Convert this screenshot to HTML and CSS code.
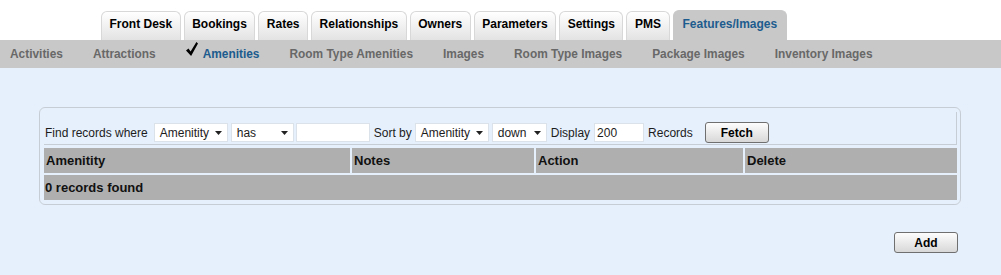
FILE: index.html
```html
<!DOCTYPE html>
<html lang="en">
<head>
    <meta charset="UTF-8">
    <meta name="viewport" content="width=device-width, initial-scale=1.0">
    <title>Amenities</title>
    <link rel="stylesheet" href="styles.css">
</head>
<body>
    <div class="tabs">
        <a class="tab">Front Desk</a>
        <a class="tab">Bookings</a>
        <a class="tab">Rates</a>
        <a class="tab">Relationships</a>
        <a class="tab">Owners</a>
        <a class="tab">Parameters</a>
        <a class="tab">Settings</a>
        <a class="tab">PMS</a>
        <a class="tab active">Features/Images</a>
    </div>

    <div class="subnav">
        <a>Activities</a>
        <a>Attractions</a>
        <a class="current"><svg class="check" width="12" height="14" viewBox="0 0 12 14"><path d="M0 8.4 L2.5 6.5 L4.6 9.5 L10.4 0 L12 1.4 L5.1 14 Z" fill="#000"/></svg>Amenities</a>
        <a>Room Type Amenities</a>
        <a>Images</a>
        <a>Room Type Images</a>
        <a>Package Images</a>
        <a>Inventory Images</a>
    </div>

    <div class="content">
        <div class="panel">
            <div class="filter">
                <span>Find records where</span>
                <span class="select field-where">Amenitity <svg width="7" height="4" viewBox="0 0 7 4"><polygon points="0,0 7,0 3.5,4" fill="#222"/></svg></span>
                <span class="select op">has <svg width="7" height="4" viewBox="0 0 7 4"><polygon points="0,0 7,0 3.5,4" fill="#222"/></svg></span>
                <input class="text search" type="text">
                <span class="gap">Sort by</span>
                <span class="select field-sort">Amenitity <svg width="7" height="4" viewBox="0 0 7 4"><polygon points="0,0 7,0 3.5,4" fill="#222"/></svg></span>
                <span class="select dir">down <svg width="7" height="4" viewBox="0 0 7 4"><polygon points="0,0 7,0 3.5,4" fill="#222"/></svg></span>
                <span class="gap">Display</span>
                <input class="text count" type="text" value="200">
                <span class="gap">Records</span>
                <button class="btn fetch">Fetch</button>
            </div>

            <div class="grid head">
                <div>Amenitity</div>
                <div>Notes</div>
                <div>Action</div>
                <div>Delete</div>
            </div>
            <div class="empty">0 records found</div>
        </div>

        <div class="actions">
            <button class="btn">Add</button>
        </div>
    </div>
</body>
</html>
```

FILE: styles.css
```css
body {
    margin: 0;
    font-family: "Liberation Sans", Arial, sans-serif;
    background-color: #e6f0fc;
    color: #1c1c1c;
}
.tabs {
    display: flex;
    align-items: flex-end;
    height: 40px;
    padding-left: 101px;
    background-color: #fff;
}
.tab {
    box-sizing: border-box;
    height: 29px;
    margin-right: 3px;
    padding: 0 7.5px;
    border: 1px solid #d8d8d8;
    border-bottom: none;
    border-radius: 6px 6px 0 0;
    background: linear-gradient(#ffffff, #e3e3e3);
    font-size: 12px;
    font-weight: bold;
    line-height: 24px;
    color: #000;
    cursor: pointer;
}
.tab.active {
    height: 30px;
    padding: 1px 9px 0 9px;
    border-color: #c8c8c8;
    background: #c8c8c8;
    color: #1d5c8e;
}
.subnav {
    display: flex;
    gap: 30px;
    height: 28px;
    padding-left: 10px;
    background-color: #c8c8c8;
    font-size: 11.9px;
    font-weight: bold;
    line-height: 28px;
    color: #686868;
}
.subnav a {
    cursor: pointer;
}
.subnav a.current {
    color: #1d5c8e;
}
.check {
    vertical-align: 2px;
    margin-right: 5px;
}
.content {
    padding: 39px 40px 0 39px;
}
.panel {
    border: 1px solid #c7cdd5;
    border-radius: 6px;
    padding: 4px 3px 4px 4px;
}
.filter {
    display: flex;
    align-items: center;
    height: 21px;
    padding: 10px 0 1px 1px;
    border-right: 1px solid #c7cdd5;
    border-bottom: 1px solid #c7cdd5;
    font-size: 12px;
}
.select {
    box-sizing: border-box;
    display: flex;
    align-items: center;
    justify-content: space-between;
    height: 19px;
    padding: 0 5px 0 5px;
    background-color: #fff;
    border: 1px solid #dce2ea;
    margin-left: 3px;
}
.select.field-where {
    width: 74px;
    margin-left: 6px;
}
.select.op {
    width: 63px;
}
.select.field-sort {
    width: 74px;
}
.select.dir {
    width: 55px;
}
.text {
    box-sizing: border-box;
    height: 19px;
    margin: 0 0 0 2px;
    padding: 0 2px;
    border: 1px solid #dce2ea;
    background-color: #fff;
    font-family: "Liberation Sans", Arial, sans-serif;
    font-size: 12px;
    color: #1c1c1c;
    outline: none;
}
.text.search {
    width: 74px;
}
.text.count {
    width: 50px;
    margin-left: 4px;
}
.gap {
    margin-left: 4px;
}
.btn {
    box-sizing: border-box;
    width: 64px;
    height: 21px;
    padding: 0;
    border: 1px solid #6f6f6f;
    border-radius: 3px;
    background: linear-gradient(#fdfdfd, #d8d8d8);
    font-family: "Liberation Sans", Arial, sans-serif;
    font-size: 12px;
    font-weight: bold;
    color: #000;
    cursor: pointer;
}
.btn.fetch {
    margin-left: 12px;
}
.grid {
    display: grid;
    grid-template-columns: 306px 182px 207px 1fr;
    gap: 2px;
}
.head {
    margin-top: 3px;
}
.head div,
.empty {
    height: 25px;
    padding-left: 2px;
    background-color: #afafaf;
    font-size: 13px;
    font-weight: bold;
    line-height: 25px;
    color: #111;
}
.empty {
    margin-top: 2px;
    padding-left: 1px;
}
.actions {
    display: flex;
    justify-content: flex-end;
    margin-top: 27px;
    padding-right: 3px;
}
```
